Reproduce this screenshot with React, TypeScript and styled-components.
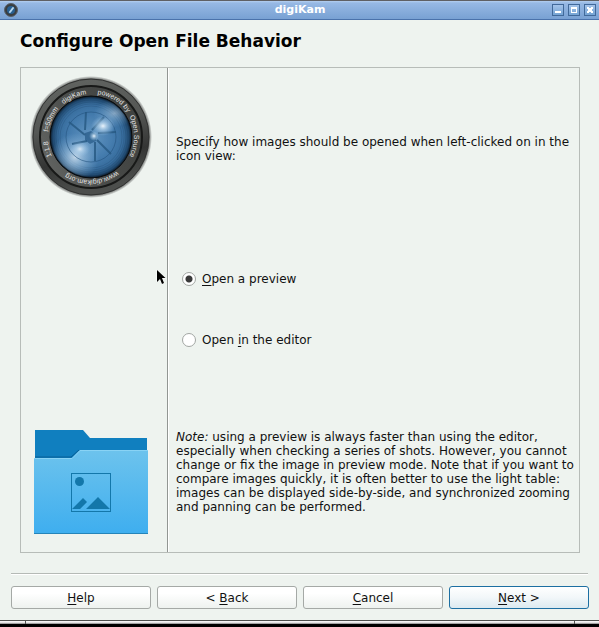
import React, { useState } from "react";
import styled, { createGlobalStyle } from "styled-components";

const GlobalStyle = createGlobalStyle`
  * { box-sizing: border-box; }
  body {
    margin: 0;
    background: #000;
    color: #111;
    font: 12px/14px "DejaVu Sans", sans-serif;
  }
`;

const Window = styled.div`
  display: flex;
  flex-direction: column;
  min-height: 100vh;
  background: #eef3ef;
`;

const TitleBar = styled.header`
  display: flex;
  align-items: center;
  gap: 4px;
  height: 20px;
  padding: 0 3px 0 4px;
  border-top: 1px solid #5f6064;
  border-bottom: 1px solid #4a72ab;
  background: linear-gradient(#b4cff0 0, #97b9e4 2px, #78a1d3 100%);
`;

const TitleSide = styled.div<{ $end?: boolean }>`
  display: flex;
  flex: 1;
  gap: 4px;
  justify-content: ${(p) => (p.$end ? "flex-end" : "flex-start")};
`;

const WindowTitle = styled.div`
  color: #fff;
  font-size: 11px;
  font-weight: bold;
`;

const WindowButton = styled.button`
  display: block;
  width: 12px;
  height: 12px;
  padding: 0;
  border: 1px solid #41699a;
  background: linear-gradient(#a4c3ea, #74a3d3);
  svg { display: block; }
`;

const Heading = styled.h1`
  margin: 0;
  padding: 10px 20px 15px;
  color: #000;
  font-size: 17px;
  line-height: 22px;
`;

const Panel = styled.main`
  display: grid;
  grid-template-columns: 146px 1fr;
  flex: 1;
  margin: 0 19px 0 20px;
  border: 1px solid #b7bcb8;
`;

const Sidebar = styled.aside`
  position: relative;
  display: flex;
  flex-direction: column;
  justify-content: space-between;
  align-items: center;
  padding: 8px 6px 17px 0;
  svg { display: block; }
`;

const Pointer = styled.svg`
  position: absolute;
  top: 201px;
  right: 1px;
`;

const Page = styled.section`
  display: grid;
  grid-template-rows: 1fr auto 1fr;
  row-gap: 19px;
  padding: 0 3px 0 8px;
  border-left: 1px solid #929693;
  box-shadow: inset 1px 0 #fff;
`;

const Paragraph = styled.p`
  align-self: center;
  margin: 0;
`;

const Options = styled.div`
  display: flex;
  flex-direction: column;
  padding: 0 0 2px 6px;
`;

const Option = styled.label`
  display: flex;
  align-items: center;
  gap: 6px;
  height: 61px;
`;

const Radio = styled.input`
  appearance: none;
  width: 14px;
  height: 14px;
  margin: 0;
  border: 1px solid #a2a6a3;
  border-radius: 50%;
  background: #fff;
  &:checked { background: radial-gradient(circle, #3a3a3a 0 3px, #fff 4px); }
`;

const Key = styled.span`
  text-decoration: underline;
  text-decoration-thickness: 1px;
  text-underline-offset: 2px;
  text-decoration-skip-ink: none;
`;

const Separator = styled.hr`
  margin: 20px 11px 11px;
  border: 0;
  border-top: 1px solid #b5bab6;
  border-bottom: 1px solid #fff;
`;

const Actions = styled.footer`
  display: grid;
  grid-template-columns: repeat(4, 1fr);
  gap: 6px;
  padding: 0 10px 11px 11px;
`;

const ActionButton = styled.button<{ $primary?: boolean }>`
  height: 23px;
  padding: 0;
  border: 1px solid ${(p) => (p.$primary ? "#1d6fa2" : "#a5a9a6")};
  border-radius: 3px;
  background: ${(p) =>
    p.$primary ? "linear-gradient(#fff, #f2f7f9 50%, #dceaf0)" : "linear-gradient(#fff 30%, #eef2ef)"};
  color: #111;
  font: inherit;
`;

const Frame = styled.div`
  display: grid;
  grid-template-columns: 25px 1fr 25px;
  height: 7px;
  border-top: 1px solid #505250;
  border-bottom: 3px solid #000;
`;

const FramePart = styled.div`
  background: linear-gradient(#fff, #dedede 60%, #777);
  & + & { border-left: 1px solid #505250; }
`;

const LENS_WORDS = [
  { text: "1:1.8", at: 19 },
  { text: "f=50mm", at: 52 },
  { text: "digiKam", at: 95 },
  { text: "powered by", at: 143 },
  { text: "Open Source", at: 197 },
  { text: "www.digikam.org", at: 278 },
];

function Lens() {
  return (
    <svg width="122" height="122" viewBox="-61 -61 122 122" role="img" aria-label="digiKam lens">
      <defs>
        <radialGradient id="edge">
          <stop offset="0.92" stopColor="#222" />
          <stop offset="1" stopColor="#222" stopOpacity="0" />
        </radialGradient>
        <linearGradient id="rim" x1="0" y1="0" x2="0.2" y2="1">
          <stop offset="0" stopColor="#626562" />
          <stop offset="0.45" stopColor="#555755" />
          <stop offset="0.75" stopColor="#343534" />
          <stop offset="1" stopColor="#4c4e4c" />
        </linearGradient>
        <linearGradient id="band" x1="0" y1="0.7" x2="1" y2="0.3">
          <stop offset="0" stopColor="#626462" />
          <stop offset="0.5" stopColor="#484a48" />
          <stop offset="1" stopColor="#3f413f" />
        </linearGradient>
        <radialGradient id="glass">
          <stop offset="0" stopColor="#6497c2" />
          <stop offset="0.55" stopColor="#447bad" />
          <stop offset="0.8" stopColor="#386d9d" />
          <stop offset="0.93" stopColor="#214a70" />
          <stop offset="1" stopColor="#09131d" />
        </radialGradient>
        <radialGradient id="glow">
          <stop offset="0" stopColor="#f3faff" stopOpacity="0.95" />
          <stop offset="0.35" stopColor="#c7e1f5" stopOpacity="0.65" />
          <stop offset="1" stopColor="#9cc7ea" stopOpacity="0" />
        </radialGradient>
        <clipPath id="glassClip"><circle r="40" /></clipPath>
        <path id="textRing" d="M-31.1 31.1A44 44 0 0 1 31.1 -31.1A44 44 0 0 1 -31.1 31.1" />
      </defs>
      <circle r="61" fill="url(#edge)" />
      <circle r="58" fill="url(#rim)" stroke="#303130" />
      <circle r="51" fill="url(#band)" stroke="#181918" strokeWidth="2" />
      <circle r="41" fill="url(#glass)" stroke="#080a0c" strokeWidth="1" />
      <g clipPath="url(#glassClip)">
        <g fill="none" stroke="#153b60" strokeWidth="0.7" opacity="0.3">
          <circle r="39" /><circle r="37" /><circle r="35" /><circle r="33" /><circle r="31" />
        </g>
        <circle cx="-16" cy="20" r="24" fill="url(#glow)" opacity="0.75" />
        <ellipse cx="25" cy="-22" rx="21" ry="14" fill="url(#glow)" opacity="0.45" transform="rotate(-4)" />
        <circle r="25" fill="none" stroke="#245581" strokeWidth="1" opacity="0.6" />
        <path
          d="M-5 -25L-6 -7M-22 -15L-6 -2M-19 7L-4 4M4 24L4 5M20 17L6 3M25 -5L7 -4M13 -20L1 -7"
          fill="none" stroke="#255781" strokeWidth="2" opacity="0.8"
        />
        <path d="M-6 -4L0 -6L6 -2L5 4L-1 7L-6 3Z" fill="#285b88" opacity="0.75" />
        <ellipse cx="12" cy="-11" rx="12" ry="10" fill="url(#glow)" />
        <ellipse cx="-11" cy="12" rx="10" ry="8" fill="url(#glow)" opacity="0.8" />
        <circle cx="3" cy="-1" r="5" fill="url(#glow)" />
      </g>
      <g fill="#e4e4e4" fontFamily="Liberation Sans, sans-serif" fontSize="7">
        {LENS_WORDS.map(({ text, at }) => (
          <text key={text}><textPath href="#textRing" startOffset={`${(at / 360) * 100}%`}>{text}</textPath></text>
        ))}
      </g>
    </svg>
  );
}

function Folder() {
  return (
    <svg width="116" height="105" viewBox="0 0 116 105" role="img" aria-label="Pictures folder">
      <defs>
        <linearGradient id="front" x1="0" y1="0" x2="0" y2="1">
          <stop offset="0" stopColor="#6dc3ed" />
          <stop offset="1" stopColor="#3eaeef" />
        </linearGradient>
      </defs>
      <path d="M2 0H50L57 8H114V40H2Z" fill="#107fbf" />
      <path d="M2 27H38L46 20" fill="none" stroke="#096096" />
      <path d="M1 28H39L47 20H115V104H1Z" fill="url(#front)" />
      <path d="M1 28.5H39L47 20.5H115" fill="none" stroke="#89d3f5" />
      <path d="M1 103.5H115" stroke="#2584b9" />
      <rect x="38.5" y="43.5" width="39" height="38" fill="none" stroke="#1377aa" />
      <circle cx="46.5" cy="51.5" r="4.5" fill="#1377aa" />
      <path d="M39 79L50 68L54 72L47 79ZM53 79L65 67L77 79Z" fill="#1377aa" />
    </svg>
  );
}

function AppIcon() {
  return (
    <svg width="14" height="14" viewBox="0 0 14 14" aria-hidden="true">
      <circle cx="7" cy="7" r="6.5" fill="#393d40" stroke="#596169" />
      <circle cx="7" cy="7" r="4" fill="#285f91" />
      <path d="M6 9L9 5" stroke="#b9d7ec" strokeWidth="2" strokeLinecap="round" />
    </svg>
  );
}

export default function App() {
  const [choice, setChoice] = useState("preview");
  return (
    <>
      <GlobalStyle />
      <Window>
        <TitleBar>
          <TitleSide><AppIcon /></TitleSide>
          <WindowTitle>digiKam</WindowTitle>
          <TitleSide $end>
            <WindowButton aria-label="Minimize">
              <svg width="10" height="10"><path d="M2 6H8V8H2Z" fill="#fff" /></svg>
            </WindowButton>
            <WindowButton aria-label="Maximize">
              <svg width="10" height="10"><path d="M2 2H8V8H2ZM3 4V7H7V4Z" fill="#fff" fillRule="evenodd" /></svg>
            </WindowButton>
            <WindowButton aria-label="Close">
              <svg width="10" height="10"><path d="M2 2H4V3H6V2H8V4H7V6H8V8H6V7H4V8H2V6H3V4H2Z" fill="#fff" /></svg>
            </WindowButton>
          </TitleSide>
        </TitleBar>
        <Heading>Configure Open File Behavior</Heading>
        <Panel>
          <Sidebar>
            <Lens />
            <Folder />
            <Pointer width="10" height="17" viewBox="0 0 10 17" aria-hidden="true">
              <path d="M1 1V13L4 10L6 15L8 14L6 9H9.5Z" fill="#000" stroke="#fff" strokeWidth="1" paintOrder="stroke" />
            </Pointer>
          </Sidebar>
          <Page>
            <Paragraph>
              Specify how images should be opened when left-clicked on in the icon view:
            </Paragraph>
            <Options role="radiogroup" aria-label="Open images">
              <Option>
                <Radio type="radio" name="open" checked={choice === "preview"} onChange={() => setChoice("preview")} />
                <span><Key>O</Key>pen a preview</span>
              </Option>
              <Option>
                <Radio type="radio" name="open" checked={choice === "editor"} onChange={() => setChoice("editor")} />
                <span>Open <Key>i</Key>n the editor</span>
              </Option>
            </Options>
            <Paragraph>
              <em>Note:</em> using a preview is always faster than using the editor, especially when
              checking a series of shots. However, you cannot change or fix the image in preview mode.
              Note that if you want to compare images quickly, it is often better to use the light
              table: images can be displayed side-by-side, and synchronized zooming and panning can be
              performed.
            </Paragraph>
          </Page>
        </Panel>
        <Separator />
        <Actions>
          <ActionButton><Key>H</Key>elp</ActionButton>
          <ActionButton>&lt; <Key>B</Key>ack</ActionButton>
          <ActionButton><Key>C</Key>ancel</ActionButton>
          <ActionButton $primary><Key>N</Key>ext &gt;</ActionButton>
        </Actions>
        <Frame><FramePart /><FramePart /><FramePart /></Frame>
      </Window>
    </>
  );
}
